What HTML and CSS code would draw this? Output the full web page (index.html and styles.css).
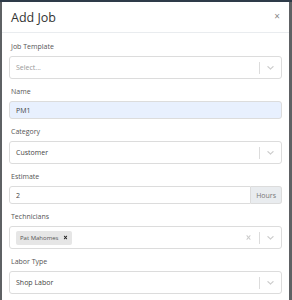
FILE: index.html
```html
<!DOCTYPE html>
<html lang="en">
<head>
    <meta charset="UTF-8">
    <meta name="viewport" content="width=device-width, initial-scale=1.0">
    <title>Add Job</title>
    <link rel="stylesheet" href="styles.css">
</head>
<body>
    <div class="topbar"></div>
    <div class="modal">
        <div class="modal-header">
            <h2>Add Job</h2>
            <span class="close">&times;</span>
        </div>
        <div class="modal-body">
            <div class="form-group">
                <label>Job Template</label>
                <div class="select">
                    <div class="value placeholder">Select...</div>
                    <div class="indicators">
                        <span class="sep"></span>
                        <svg class="chev" viewBox="0 0 20 20"><path d="M4.516 7.548c0.436-0.446 1.043-0.481 1.576 0l3.908 3.747 3.908-3.747c0.533-0.481 1.141-0.446 1.574 0 0.436 0.445 0.408 1.197 0 1.615-0.406 0.418-4.695 4.502-4.695 4.502-0.217 0.223-0.502 0.335-0.787 0.335s-0.57-0.112-0.789-0.335c0 0-4.287-4.084-4.695-4.502s-0.436-1.17 0-1.615z"/></svg>
                    </div>
                </div>
            </div>
            <div class="form-group">
                <label>Name</label>
                <input class="input filled" type="text" value="PM1">
            </div>
            <div class="form-group">
                <label>Category</label>
                <div class="select">
                    <div class="value">Customer</div>
                    <div class="indicators">
                        <span class="sep"></span>
                        <svg class="chev" viewBox="0 0 20 20"><path d="M4.516 7.548c0.436-0.446 1.043-0.481 1.576 0l3.908 3.747 3.908-3.747c0.533-0.481 1.141-0.446 1.574 0 0.436 0.445 0.408 1.197 0 1.615-0.406 0.418-4.695 4.502-4.695 4.502-0.217 0.223-0.502 0.335-0.787 0.335s-0.57-0.112-0.789-0.335c0 0-4.287-4.084-4.695-4.502s-0.436-1.17 0-1.615z"/></svg>
                    </div>
                </div>
            </div>
            <div class="form-group">
                <label>Estimate</label>
                <div class="input-group">
                    <input class="input" type="text" value="2">
                    <span class="addon">Hours</span>
                </div>
            </div>
            <div class="form-group">
                <label>Technicians</label>
                <div class="select">
                    <div class="value">
                        <span class="tag">Pat Mahomes
                            <svg class="tag-x" viewBox="0 0 20 20"><path d="M14.348 14.849c-0.469 0.469-1.229 0.469-1.697 0l-2.651-3.030-2.651 3.029c-0.469 0.469-1.229 0.469-1.697 0-0.469-0.469-0.469-1.229 0-1.697l2.758-3.15-2.759-3.152c-0.469-0.469-0.469-1.228 0-1.697s1.228-0.469 1.697 0l2.652 3.031 2.651-3.031c0.469-0.469 1.228-0.469 1.697 0s0.469 1.229 0 1.697l-2.758 3.152 2.758 3.15c0.469 0.469 0.469 1.229 0 1.698z"/></svg>
                        </span>
                    </div>
                    <div class="indicators">
                        <svg class="clear" viewBox="0 0 20 20"><path d="M14.348 14.849c-0.469 0.469-1.229 0.469-1.697 0l-2.651-3.030-2.651 3.029c-0.469 0.469-1.229 0.469-1.697 0-0.469-0.469-0.469-1.229 0-1.697l2.758-3.15-2.759-3.152c-0.469-0.469-0.469-1.228 0-1.697s1.228-0.469 1.697 0l2.652 3.031 2.651-3.031c0.469-0.469 1.228-0.469 1.697 0s0.469 1.229 0 1.697l-2.758 3.152 2.758 3.15c0.469 0.469 0.469 1.229 0 1.698z"/></svg>
                        <span class="sep"></span>
                        <svg class="chev" viewBox="0 0 20 20"><path d="M4.516 7.548c0.436-0.446 1.043-0.481 1.576 0l3.908 3.747 3.908-3.747c0.533-0.481 1.141-0.446 1.574 0 0.436 0.445 0.408 1.197 0 1.615-0.406 0.418-4.695 4.502-4.695 4.502-0.217 0.223-0.502 0.335-0.787 0.335s-0.57-0.112-0.789-0.335c0 0-4.287-4.084-4.695-4.502s-0.436-1.17 0-1.615z"/></svg>
                    </div>
                </div>
            </div>
            <div class="form-group">
                <label>Labor Type</label>
                <div class="select">
                    <div class="value">Shop Labor</div>
                    <div class="indicators">
                        <span class="sep"></span>
                        <svg class="chev" viewBox="0 0 20 20"><path d="M4.516 7.548c0.436-0.446 1.043-0.481 1.576 0l3.908 3.747 3.908-3.747c0.533-0.481 1.141-0.446 1.574 0 0.436 0.445 0.408 1.197 0 1.615-0.406 0.418-4.695 4.502-4.695 4.502-0.217 0.223-0.502 0.335-0.787 0.335s-0.57-0.112-0.789-0.335c0 0-4.287-4.084-4.695-4.502s-0.436-1.17 0-1.615z"/></svg>
                    </div>
                </div>
            </div>
        </div>
    </div>
</body>
</html>
```

FILE: styles.css
```css
html, body {
    margin: 0;
    height: 100%;
    overflow: hidden;
}
body {
    font-family: "Open Sans", "Noto Sans", Arial, sans-serif;
    font-size: 7px;
    color: #444;
    background-color: #5e6164;
}
.topbar {
    height: 2px;
    background-color: #2e3b49;
}
.modal {
    margin: 0 3px 0 2px;
    background-color: #fff;
    height: 298px;
    overflow: hidden;
}
.modal-header {
    display: flex;
    align-items: center;
    justify-content: space-between;
    height: 30px;
    padding: 0 9px 0 9px;
    border-bottom: 1px solid #e9ecef;
}
.modal-header h2 {
    margin: 0;
    font-size: 12.5px;
    font-weight: 500;
    color: #333;
}
.close {
    font-size: 10px;
    color: #888;
    margin-top: -2px;
}
.modal-body {
    padding: 9px 7px 0 7px;
}
.form-group {
    margin-bottom: 8px;
}
label {
    display: block;
    height: 10px;
    line-height: 10px;
    margin-bottom: 4px;
    padding-left: 2px;
    color: #555;
}
.select {
    display: flex;
    align-items: center;
    height: 21px;
    border: 1px solid #dcdcdc;
    border-radius: 3px;
    background-color: #fff;
}
.value {
    flex: 1;
    padding-left: 6px;
    color: #444;
}
.placeholder {
    color: #999;
}
.indicators {
    display: flex;
    align-items: center;
    height: 100%;
}
.sep {
    width: 1px;
    height: 12px;
    background-color: #dcdcdc;
}
.chev {
    width: 11px;
    height: 11px;
    margin: 0 5px 0 5px;
    fill: #ccc;
}
.clear {
    width: 9px;
    height: 9px;
    margin-right: 6px;
    fill: #ccc;
}
.input {
    box-sizing: border-box;
    display: block;
    width: 100%;
    height: 18px;
    margin: 0;
    padding: 0 6px;
    border: 1px solid #dcdcdc;
    border-radius: 3px;
    font-family: inherit;
    font-size: 7px;
    color: #444;
    outline: none;
}
.filled {
    background-color: #e8f0fe;
}
.input-group {
    display: flex;
}
.input-group .input {
    flex: 1;
    border-radius: 3px 0 0 3px;
}
.addon {
    display: flex;
    align-items: center;
    box-sizing: border-box;
    height: 18px;
    padding: 0 5px;
    background-color: #e9ecef;
    border: 1px solid #dcdcdc;
    border-left: none;
    border-radius: 0 3px 3px 0;
    color: #777;
}
.tag {
    display: inline-flex;
    align-items: center;
    padding: 3px 3px 3px 4px;
    background-color: #e6e6e6;
    border-radius: 2px;
    font-size: 6px;
    color: #555;
}
.tag-x {
    width: 7px;
    height: 7px;
    margin-left: 4px;
    fill: #222;
}
```
